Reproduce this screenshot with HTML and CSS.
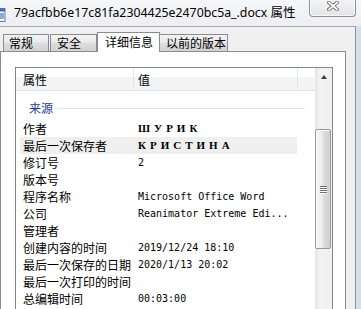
FILE: index.html
```html
<!DOCTYPE html>
<html lang="zh-CN">
<head>
<meta charset="utf-8">
<title>属性</title>
<link rel="stylesheet" href="styles.css">
</head>
<body>
<div class="window">
  <div class="titlebar">
    <svg class="appicon" width="6" height="14" viewBox="0 0 6 14">
      <rect x="-4" y="0.5" width="9" height="13" fill="#f4f8fd" stroke="#5a7fb6"/>
      <rect x="-4" y="0.5" width="9" height="3" fill="#3d6fb8"/>
      <line x1="0" y1="6" x2="4" y2="6" stroke="#2f5fa8"/>
      <line x1="0" y1="8" x2="4" y2="8" stroke="#2f5fa8"/>
      <line x1="0" y1="10" x2="4" y2="10" stroke="#2f5fa8"/>
    </svg>
    <span class="title">79acfbb6e17c81fa2304425e2470bc5a_.docx <span class="title-cjk">属性</span></span>
    <div class="close">
      <svg width="12" height="10" viewBox="0 0 12 10">
        <path d="M2 1.5 L10 8.5 M10 1.5 L2 8.5" stroke="#6b6b6b" stroke-width="3.6" stroke-linecap="square"/>
        <path d="M2 1.5 L10 8.5 M10 1.5 L2 8.5" stroke="#ffffff" stroke-width="1.8" stroke-linecap="square"/>
      </svg>
    </div>
  </div>
  <div class="client">
    <div class="tabs">
      <div class="tab t1">常规</div>
      <div class="tab t2">安全</div>
      <div class="tab t3 active">详细信息</div>
      <div class="tab t4">以前的版本</div>
    </div>
    <div class="panel">
      <div class="listview">
        <div class="lv-main">
          <div class="lv-header">
            <div class="hcol c1">属性</div>
            <div class="hcol c2">值</div>
            <div class="hcol c3"></div>
          </div>
          <div class="group"><span class="gtext">来源</span><i class="gline"></i></div>
          <div class="row"><span class="k">作者</span><span class="v cyr">ШУРИК</span></div>
          <div class="row sel"><span class="k">最后一次保存者</span><span class="v cyr">КРИСТИНА</span></div>
          <div class="row"><span class="k">修订号</span><span class="v mono">2</span></div>
          <div class="row"><span class="k">版本号</span><span class="v mono"></span></div>
          <div class="row"><span class="k">程序名称</span><span class="v mono">Microsoft Office Word</span></div>
          <div class="row"><span class="k">公司</span><span class="v mono">Reanimator Extreme Edi...</span></div>
          <div class="row"><span class="k">管理者</span><span class="v mono"></span></div>
          <div class="row"><span class="k">创建内容的时间</span><span class="v mono">2019/12/24 18:10</span></div>
          <div class="row"><span class="k">最后一次保存的日期</span><span class="v mono">2020/1/13 20:02</span></div>
          <div class="row"><span class="k">最后一次打印的时间</span><span class="v mono"></span></div>
          <div class="row"><span class="k">总编辑时间</span><span class="v mono">00:03:00</span></div>
        </div>
        <div class="vscroll">
          <div class="sb-up"><i class="arrow"></i></div>
          <div class="thumb"><i class="grip"></i><i class="grip"></i><i class="grip"></i><i class="grip"></i></div>
        </div>
      </div>
    </div>
  </div>
</div>
</body>
</html>
```

FILE: styles.css
```css
* { box-sizing: border-box; }
html, body { margin: 0; padding: 0; }
body {
  width: 361px;
  height: 309px;
  overflow: hidden;
  background: #d6e0eb;
  font-family: "Noto Sans CJK SC", "Noto Sans", sans-serif;
  font-size: 12px;
  color: #000;
}
.window {
  display: flex;
  flex-direction: column;
  height: 309px;
  overflow: hidden;
}
.titlebar {
  height: 26px;
  flex: none;
  display: flex;
  align-items: flex-start;
  background: linear-gradient(#f6f7f9, #eceef1);
}
.appicon {
  flex: none;
  margin-top: 8px;
}
.title {
  margin-left: 8px;
  margin-top: 3px;
  font-family: "Noto Sans", "Noto Sans CJK SC", sans-serif;
  font-size: 12.3px;
  line-height: 17px;
  color: #000;
  white-space: nowrap;
}
.title-cjk {
  font-family: "Noto Sans CJK SC", sans-serif;
  font-size: 12.5px;
}
.close {
  margin-left: auto;
  margin-right: 5px;
  margin-top: -1px;
  width: 47px;
  height: 18px;
  border: 1px solid #8d8f93;
  border-top: none;
  border-radius: 0 0 4px 4px;
  background: linear-gradient(#f4f4f5, #e3e4e6);
  box-shadow: inset 0 0 0 1px rgba(255,255,255,0.7);
  display: flex;
  align-items: center;
  justify-content: center;
  padding-bottom: 4px;
}
.client {
  flex: 1;
  min-height: 0;
  width: 356px;
  background: #f0f0f0;
  border-top: 1px solid #a9abae;
  border-right: 1px solid #8e9196;
  padding-top: 5px;
  display: flex;
  flex-direction: column;
}
.tabs {
  height: 19px;
  flex: none;
  display: flex;
  align-items: flex-end;
  position: relative;
  z-index: 1;
}
.tab {
  height: 17px;
  border: 1px solid #898c95;
  border-bottom: none;
  background: linear-gradient(#f3f3f3, #ebebeb 45%, #dedede 50%, #d2d2d2);
  font-size: 12px;
  line-height: 16px;
  padding-left: 5px;
  white-space: nowrap;
}
.t1 { margin-left: 3px; width: 46px; }
.t2 { margin-left: 1px; width: 47px; padding-left: 6px; }
.t3 { width: 63px; }
.t4 { margin-left: -1px; width: 69px; padding-left: 6px; }
.tab.active {
  height: 20px;
  margin-bottom: -1px;
  background: #fff;
  padding-left: 7px;
  line-height: 18px;
  position: relative;
  z-index: 2;
}
.panel {
  flex: 1;
  min-height: 0;
  width: 346px;
  background: #fff;
  border: 1px solid #898c95;
  border-bottom: none;
  padding: 15px 0 0 14px;
  overflow: hidden;
}
.listview {
  width: 318px;
  height: 242px;
  border: 1px solid #828790;
  border-bottom: none;
  display: flex;
  overflow: hidden;
}
.lv-main {
  width: 299px;
  flex: none;
}
.lv-header {
  height: 23px;
  display: flex;
  border-bottom: 1px solid #e2e3e5;
  background: linear-gradient(#ffffff 0, #ffffff 40%, #f3f4f6 40%, #f3f4f6 100%);
}
.hcol {
  height: 22px;
  line-height: 23px;
  border-right: 1px solid #e4e5e7;
  white-space: nowrap;
}
.c1 { width: 118px; padding-left: 7px; }
.c2 { width: 164px; padding-left: 4px; }
.c3 { flex: 1; border-right: none; }
.group {
  margin-top: 9px;
  margin-bottom: 4px;
  height: 16px;
  display: flex;
  align-items: center;
  padding-left: 13px;
}
.gtext {
  color: #1e3c98;
  line-height: 16px;
}
.gline {
  flex: 1;
  height: 1px;
  background: #dde6f3;
  margin-left: 4px;
  margin-right: 10px;
}
.row {
  height: 17px;
  margin-left: 4px;
  width: 277px;
  display: flex;
  align-items: center;
  white-space: nowrap;
}
.row.sel { background: #efefef; }
.k {
  width: 118px;
  flex: none;
  padding-left: 3px;
  line-height: 17px;
}
.v { line-height: 17px; }
.mono {
  font-family: "DejaVu Sans Mono", "Liberation Mono", monospace;
  font-size: 10px;
}
.cyr {
  font-family: "Liberation Serif", serif;
  font-weight: bold;
  font-size: 11px;
  letter-spacing: 4px;
}
.vscroll {
  width: 17px;
  flex: none;
  background: linear-gradient(to right, #e6e6e6, #f2f2f2 20%, #f0f0f0);
  border-left: 1px solid #e8e8e8;
  display: flex;
  flex-direction: column;
}
.sb-up {
  height: 17px;
  flex: none;
  display: flex;
  align-items: center;
  justify-content: center;
}
.arrow {
  display: block;
  width: 0;
  height: 0;
  border-left: 3.5px solid transparent;
  border-right: 3.5px solid transparent;
  border-bottom: 4px solid #3c3c3c;
}
.thumb {
  flex: none;
  margin-top: 44px;
  margin-left: -1px;
  width: 16px;
  height: 120px;
  border: 1px solid #979797;
  border-radius: 2px;
  background: linear-gradient(to right, #f5f5f5, #ececec 45%, #dcdcdc 55%, #d0d0d0);
  box-shadow: inset 1px 1px 0 #ffffff;
  display: flex;
  flex-direction: column;
  align-items: center;
  justify-content: center;
  gap: 1px;
}
.grip {
  display: block;
  width: 7px;
  height: 1px;
  background: #6f6f6f;
  box-shadow: 0 1px 0 #ffffff;
}
```
